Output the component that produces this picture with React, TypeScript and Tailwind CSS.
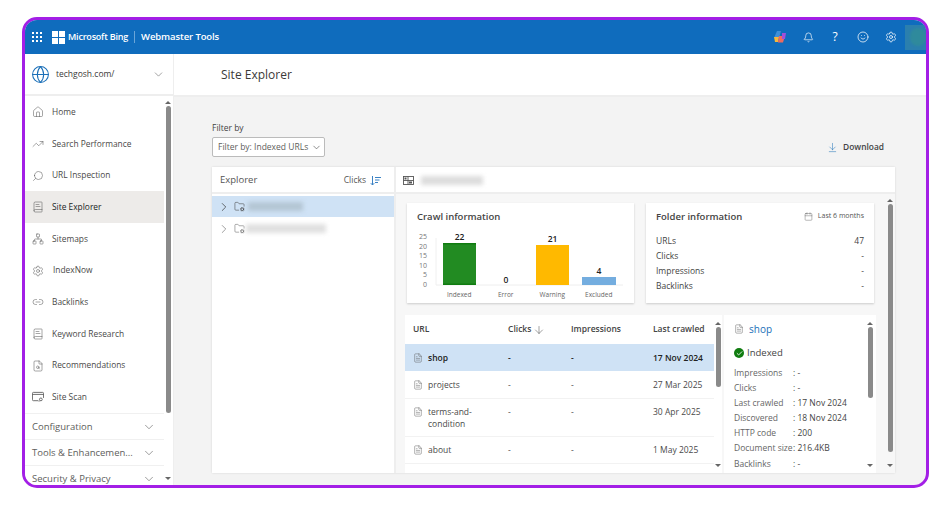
import React from "react";
import { Home, TrendingUp, Search, FileText, Network, Settings, Link2, BookText, FileSearch, ChevronDown, ChevronRight, Globe, Bell, Smile, ArrowDownToLine, ArrowDown, Calendar, FolderCog, Check } from "lucide-react";

function Scrollbar({ thumb, className = "" }: { thumb: string; className?: string }) {
  return (
    <div className={`flex flex-col items-center w-[8px] shrink-0 ${className}`}>
      <div className="h-[7px] flex items-center justify-center"><div className="w-0 h-0 border-x-[3px] border-x-transparent border-b-[3px] border-b-[#666]" /></div>
      <div className={`w-[5px] rounded-full bg-[#8a8a8a] ${thumb}`} />
      <div className="flex-1" />
      <div className="h-[7px] flex items-center justify-center"><div className="w-0 h-0 border-x-[3px] border-x-transparent border-t-[3px] border-t-[#666]" /></div>
    </div>
  );
}

function SiteScanIcon(props: { size?: number; strokeWidth?: number; className?: string }) {
  return (
    <svg width={13} height={12} viewBox="0 0 13 12" fill="none" stroke="currentColor" strokeWidth="0.9" className={props.className}>
      <path d="M7 10H1.5a1 1 0 0 1-1-1V2a1 1 0 0 1 1-1h10a1 1 0 0 1 1 1v5" />
      <path d="M.5 3.2h12" />
      <circle cx="9.6" cy="8.6" r="1.5" />
      <path d="M8.6 9.8 7.6 11" />
    </svg>
  );
}

const nav: [string, React.ComponentType<any>, boolean?][] = [
  ["Home", Home],
  ["Search Performance", TrendingUp],
  ["URL Inspection", Search],
  ["Site Explorer", BookText, true],
  ["Sitemaps", Network],
  ["IndexNow", Settings],
  ["Backlinks", Link2],
  ["Keyword Research", BookText],
  ["Recommendations", FileSearch],
  ["Site Scan", SiteScanIcon],
];

const rows = [
  { n: ["shop"], d: "17 Nov 2024", sel: true, h: "h-[27px]" },
  { n: ["projects"], d: "27 Mar 2025", h: "h-[28px]" },
  { n: ["terms-and-", "condition"], d: "30 Apr 2025", h: "h-[38px]" },
  { n: ["about"], d: "1 May 2025", h: "h-[27px]" },
];

const details = [
  ["Impressions", ": -"],
  ["Clicks", ": -"],
  ["Last crawled", ": 17 Nov 2024"],
  ["Discovered", ": 18 Nov 2024"],
  ["HTTP code", ": 200"],
  ["Document size", ": 216.4KB"],
  ["Backlinks", ": -"],
];

function Chart() {
  const t = { fontFamily: "'Open Sans', sans-serif" };
  return (
    <svg width="218" height="58" viewBox="0 -2 218 58" className="block" style={t}>
      {[[25, 2.5], [20, 12], [15, 21.5], [10, 31], [5, 40.5], [0, 50]].map(([l, y]) => (
        <text key={l} x="20" y={y + 2.5} fontSize="7" textAnchor="end" fill="#777">{l}</text>
      ))}
      <line x1="29" y1="51" x2="216" y2="51" stroke="#eee" />
      <line x1="29" y1="4" x2="29" y2="51" stroke="#f0f0f0" />
      <rect x="36" y="9" width="33" height="42" fill="#228b22" />
      <rect x="36" y="9" width="33" height="1.5" fill="#107c10" />
      <rect x="36" y="49.5" width="33" height="1.5" fill="#107c10" />
      <rect x="129" y="11" width="33" height="40" fill="#ffb900" />
      <rect x="175" y="43" width="34" height="8" fill="#74addf" />
      {[["22", 52.5, 6], ["0", 99, 48.5], ["21", 145.5, 8], ["4", 192, 40]].map(([l, x, y]) => (
        <text key={l as string} x={x} y={y} fontSize="8.5" fontWeight="600" textAnchor="middle" fill="#222">{l}</text>
      ))}
    </svg>
  );
}

export default function App() {
  return (
    <div className="w-[950px] h-[510px] bg-white pl-[22px] pt-[17px] overflow-hidden text-[#323130] font-['Open_Sans',sans-serif]">
      <div className="w-[907px] h-[471px] border-[3px] border-[#a31fe6] rounded-[15px] overflow-hidden flex flex-col bg-[#f3f3f3]">
        <header className="h-[34px] shrink-0 bg-[#0f6cbd] flex items-center text-white">
          <div className="ml-[7px] grid grid-cols-3 gap-[2px] w-[10px]">
            {Array.from({ length: 9 }).map((_, i) => <div key={i} className="w-[2px] h-[2px] bg-white" />)}
          </div>
          <div className="ml-[10px] grid grid-cols-2 gap-[1px] w-[13px] h-[13px]">
            {[0, 1, 2, 3].map((i) => <div key={i} className="bg-white" />)}
          </div>
          <span className="ml-[3px] text-[9px] font-semibold tracking-[-0.2px]">Microsoft Bing</span>
          <div className="mx-[6px] w-px h-[12px] bg-[#6aa5d8]" />
          <span className="text-[9.5px] font-semibold tracking-[-0.1px]">Webmaster Tools</span>
          <div className="flex-1" />
          <svg width="14" height="14" viewBox="0 0 14 14" className="mr-[16px]">
            <path d="M4 1h4l-2 7H1z" fill="#3f8fd8" />
            <path d="M1 7h5l-1 5H2z" fill="#f6b73c" />
            <path d="M6 6h6l-2 6.5H5z" fill="#ee6a5f" />
            <path d="M9 3h4l-1 6H9z" fill="#a04fd8" />
          </svg>
          <Bell size={11} strokeWidth={1.5} className="mr-[17px]" />
          <span className="text-[12px] w-[8px] text-center mr-[18px] leading-none">?</span>
          <Smile size={12} strokeWidth={1.5} className="mr-[16px]" />
          <Settings size={12} strokeWidth={1.5} className="mr-[8px]" />
          <div className="w-[21px] h-[25px] bg-[#2b7fae] flex items-center justify-end">
            <div className="w-[16px] h-[18px] rounded-full bg-[#2f8a9c] blur-[1px]" />
          </div>
        </header>
        <div className="flex-1 min-h-0 flex">
          <aside className="w-[149px] shrink-0 bg-white border-r border-[#eee] flex flex-col">
            <div className="h-[42.4px] shrink-0 flex items-center border-b-2 border-[#eee] pl-[6px] pr-[8px]">
              <Globe size={19} strokeWidth={1.3} className="text-[#1a6fb8]" />
              <span className="ml-[6px] text-[8.5px] flex-1 text-[#3b3a39]">techgosh.com/</span>
              <ChevronDown size={13} strokeWidth={1.1} className="text-[#666]" />
            </div>
            <div className="flex-1 min-h-0 flex overflow-hidden">
              <div className="flex-1 min-w-0">
                {nav.map(([label, Icon, active]) => (
                  <div key={label} className={`h-[31.7px] flex items-center pl-[7px] ${active ? "bg-[#edebe9] text-[#201f1e]" : "text-[#4a4948]"}`}>
                    <span className="w-[12px] flex justify-center shrink-0">
                      <Icon size={12} strokeWidth={1.05} className={`text-[#555] ${label === "URL Inspection" ? "-scale-x-100" : ""}`} />
                    </span>
                    <span className={`text-[8.4px] ${label === "IndexNow" ? "ml-[9px]" : "ml-[8px]"}`}>{label}</span>
                  </div>
                ))}
                {["Configuration", "Tools & Enhancemen...", "Security & Privacy"].map((l) => (
                  <div key={l} className="h-[26px] border-t border-[#f0f0f0] flex items-center pl-[7px] pr-[8px]">
                    <span className="text-[9.5px] text-[#605e5c] flex-1 whitespace-nowrap">{l}</span>
                    <ChevronDown size={14} strokeWidth={1.1} className="text-[#666]" />
                  </div>
                ))}
              </div>
              <Scrollbar thumb="h-[307px]" className="mr-[1px] mt-[3px] mb-[3px]" />
            </div>
          </aside>
          <main className="flex-1 min-w-0 flex flex-col">
            <div className="h-[43px] shrink-0 bg-white border-b-2 border-[#eee] flex items-center pl-[47px]">
              <h1 className="text-[12px] text-[#3b3a39]">Site Explorer</h1>
            </div>
            <div className="flex-1 min-h-0 pl-[38px] pr-[31px] pt-[25px]">
              <div className="flex items-end justify-between h-[35px]">
                <div>
                  <div className="text-[8.5px] font-medium leading-[12px] text-[#444]">Filter by</div>
                  <div className="mt-[3px] w-[113px] h-[20px] bg-white border border-[#bbb] rounded-[2px] flex items-center pl-[5px] pr-[2px] justify-between">
                    <span className="text-[8.5px] text-[#605e5c]">Filter by: Indexed URLs</span>
                    <ChevronDown size={11} strokeWidth={1.3} className="text-[#444]" />
                  </div>
                </div>
                <div className="flex items-center mb-[3px] mr-[11px]">
                  <ArrowDownToLine size={11} strokeWidth={1.1} className="text-[#1a6fb8]" />
                  <span className="ml-[5px] text-[8.4px] font-semibold text-[#444]">Download</span>
                </div>
              </div>
              <section className="mt-[10px] h-[306px] bg-white shadow-[0_0_2px_rgba(0,0,0,0.12)] flex">
                <div className="w-[184px] shrink-0 border-r-2 border-[#eee] flex flex-col">
                  <div className="h-[27px] border-b-2 border-[#eee] flex items-center pl-[8px] pr-[13px] pt-[2px] justify-between">
                    <span className="text-[9.5px] text-[#555]">Explorer</span>
                    <span className="flex items-center gap-[4px] text-[8.5px] text-[#555]">Clicks
                      <svg width="11" height="10" viewBox="0 0 11 10" fill="none" stroke="#3b82c4" strokeWidth="1"><path d="M2.5 0v9M.8 7.2 2.5 9l1.7-1.8M5 1.5h6M5 4h4.5M5 6.5h3" /></svg>
                    </span>
                  </div>
                  <div className="mt-[2px] h-[21px] bg-[#cfe2f5] flex items-center pl-[5px]">
                    <ChevronRight size={14} strokeWidth={1.2} className="text-[#333]" />
                    <FolderCog size={11} strokeWidth={1.2} className="ml-[3px] text-[#444]" />
                    <div className="ml-[3px] w-[55px] h-[9px] bg-[#b4c6d4] blur-[2px]" />
                  </div>
                  <div className="mt-[1px] h-[21px] flex items-center pl-[5px]">
                    <ChevronRight size={14} strokeWidth={1.2} className="text-[#777]" />
                    <FolderCog size={11} strokeWidth={1.2} className="ml-[3px] text-[#666]" />
                    <div className="ml-[1px] w-[80px] h-[9px] bg-[#e0e0e0] blur-[2px]" />
                  </div>
                </div>
                <div className="flex-1 min-w-0 flex flex-col">
                  <div className="h-[27px] shrink-0 border-b-2 border-[#eee] flex items-center pl-[7px] pt-[1px]">
                    <svg width="11" height="9" viewBox="0 0 11 9" fill="none" stroke="#555" strokeWidth="0.9"><rect x=".5" y=".5" width="10" height="8" /><path d="M.5 4.5h10M5 .5v8" /><rect x="1.5" y="1.5" width="2" height="2" fill="#555" stroke="none" /><rect x="6" y="5.5" width="3" height="2" fill="#555" stroke="none" /></svg>
                    <div className="ml-[7px] w-[62px] h-[9px] bg-[#ddd] blur-[2px]" />
                  </div>
                  <div className="flex-1 min-h-0 flex bg-[#f7f7f7]">
                    <div className="flex-1 min-w-0 pl-[11px] pt-[9px] flex flex-col">
                      <div className="flex gap-[12px]">
                        <div className="w-[227px] h-[100px] bg-white shadow-[0_1px_2px_rgba(0,0,0,0.18)] pl-[10px] pt-[7px]">
                          <div className="text-[9.5px] font-semibold leading-[13px] text-[#444]">Crawl information</div>
                          <div className="-ml-[10px] mt-[9px]"><Chart /></div>
                          <div className="flex text-[6.5px] text-[#666] pl-[19px] leading-[9px]">
                            <span className="w-[46.5px] text-center">Indexed</span>
                            <span className="w-[46.5px] text-center">Error</span>
                            <span className="w-[46.5px] text-center">Warning</span>
                            <span className="w-[46.5px] text-center">Excluded</span>
                          </div>
                        </div>
                        <div className="w-[228px] h-[100px] bg-white shadow-[0_1px_2px_rgba(0,0,0,0.18)] px-[10px] pt-[7px]">
                          <div className="flex items-center justify-between">
                            <span className="text-[9.5px] font-semibold leading-[13px] text-[#444]">Folder information</span>
                            <span className="flex items-center gap-[3px] text-[7px] text-[#555]"><Calendar size={9} strokeWidth={1.1} />&nbsp;Last 6 months</span>
                          </div>
                          <div className="mt-[10px] text-[8.5px] text-[#444] leading-[15px]">
                            {[["URLs", "47"], ["Clicks", "-"], ["Impressions", "-"], ["Backlinks", "-"]].map(([a, b]) => (
                              <div key={a} className="flex justify-between"><span>{a}</span><span>{b}</span></div>
                            ))}
                          </div>
                        </div>
                      </div>
                      <div className="-ml-[2px] mt-[12px] flex-1 min-h-0 flex overflow-hidden">
                        <div className="w-[317px] shrink-0 bg-white flex">
                          <div className="flex-1 min-w-0">
                            <div className="h-[29px] grid grid-cols-[95px_63px_82px_1fr] items-center pl-[8px] text-[8.5px] font-semibold text-[#444]">
                              <span>URL</span>
                              <span className="flex items-center gap-[2px]">Clicks <ArrowDown size={12} strokeWidth={1} className="text-[#444]" /></span>
                              <span>Impressions</span>
                              <span className="whitespace-nowrap">Last crawled</span>
                            </div>
                            {rows.map((r) => (
                              <div key={r.d} className={`${r.h} ${r.sel ? "bg-[#cfe2f5] font-semibold text-[#222]" : "border-b border-[#f2f2f2] text-[#4a4a4a]"} grid grid-cols-[95px_63px_82px_1fr] ${r.n.length > 1 ? "items-start pt-[7px]" : "items-center"} pl-[8px] text-[8.5px]`}>
                                <span className="flex items-start gap-[5px] leading-[12px]">
                                  <FileText size={10} strokeWidth={1.1} className="text-[#555] shrink-0 mt-[1px]" />
                                  <span>{r.n.map((x) => <span key={x} className="block">{x}</span>)}</span>
                                </span>
                                <span className="leading-[12px]">-</span>
                                <span className="leading-[12px]">-</span>
                                <span className="leading-[12px] whitespace-nowrap">{r.d}</span>
                              </div>
                            ))}
                          </div>
                          <Scrollbar thumb="h-[60px]" className="mt-[5px] mb-[4px]" />
                        </div>
                        <div className="w-[152px] shrink-0 ml-[2px] bg-white flex pl-[10px]">
                          <div className="flex-1 min-w-0">
                            <div className="flex items-center gap-[5px] h-[28px]">
                              <FileText size={10} strokeWidth={1.1} className="text-[#555]" />
                              <span className="text-[10px] text-[#1a6fb8]">shop</span>
                            </div>
                            <div className="flex items-center gap-[3px] h-[18px] mt-[1px]">
                              <div className="w-[10px] h-[10px] rounded-full bg-[#107c10] flex items-center justify-center"><Check size={7} strokeWidth={3} className="text-white" /></div>
                              <span className="text-[9.5px] text-[#444]">Indexed</span>
                            </div>
                            <div className="mt-[3px] text-[8.5px] leading-[15.1px]">
                              {details.map(([a, b]) => (
                                <div key={a} className="flex whitespace-nowrap"><span className="w-[59px] text-[#666]">{a}</span><span className="text-[#444]">{b}</span></div>
                              ))}
                            </div>
                          </div>
                          <Scrollbar thumb="h-[71px]" className="mt-[5px] mb-[4px] mr-[2px]" />
                        </div>
                      </div>
                    </div>
                    <Scrollbar thumb="h-[248px]" className="mt-[3px] mb-[4px] mr-[1px]" />
                  </div>
                </div>
              </section>
            </div>
          </main>
        </div>
      </div>
    </div>
  );
}
